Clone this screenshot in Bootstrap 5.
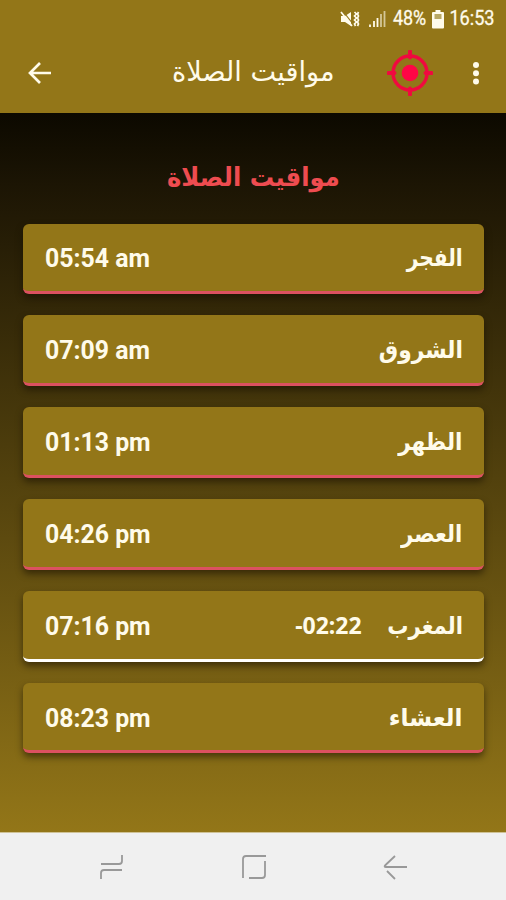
<!DOCTYPE html>
<html lang="ar">
<head>
<meta charset="utf-8">
<meta name="viewport" content="width=device-width, initial-scale=1">
<title>مواقيت الصلاة</title>
<link rel="stylesheet" href="https://cdn.jsdelivr.net/npm/bootstrap@5.3.0/dist/css/bootstrap.min.css">
<style>
:root{--gold:#937618;--cream:#fffbea}
body{height:900px;overflow:hidden;font-family:Roboto,"DejaVu Sans",sans-serif;color:var(--cream);background:#f0f0f0}
svg{display:block;flex:none}
.status{height:36px;padding:2px 11px 0 0;background:var(--gold);font-size:19.5px;line-height:36px;-webkit-text-stroke:.3px var(--cream)}
.status span{display:inline-block;transform-origin:right;white-space:nowrap}
.pct{width:34px;margin-left:6px}
.clock{width:46px;margin-left:5px}
.battery{margin-left:6px}
.pct span{transform:scaleX(.92)}
.clock span{transform:scaleX(.93)}
.appbar{height:77px;background:var(--gold);padding:0 26px 3px 26px}
.dots{margin-left:39px}
.ar{display:inline-block;font-family:"DejaVu Sans",sans-serif;white-space:nowrap;line-height:1}
.bar-title{margin-left:118px;width:164px}
.bar-title .ar{font-size:27.2px}
.heading{height:110.5px;padding-top:17px;color:#ee4c50}
.heading .ar{font-size:26px;font-weight:700;transform:scaleX(.935)}
.screen{height:719px;background:linear-gradient(#0c0900,#1c1504 10%,#937618);padding:0 22px 0 23px}
.prayers{gap:21.4px}
.prayer{height:70.5px;border-radius:6px;background:var(--gold);border-bottom:3px solid #dc5160;padding:2px 21.5px 0;box-shadow:0 4px 7px rgba(20,12,0,.55)}
.prayer.next{border-bottom-color:#fff}
.time{font-size:26px;font-weight:700;line-height:1;transform:scaleX(.955);transform-origin:left}
.prayer .ar{font-size:24px;font-weight:700;transform-origin:right}
.fajr{transform:scaleX(.84)}
.shuruq{transform:scaleX(.905)}
.dhuhr{transform:scaleX(.9)}
.asr{transform:scaleX(.885)}
.maghrib{transform:scaleX(.88)}
.isha{transform:scaleX(.965)}
.left{font:700 23px/1 "Noto Sans",sans-serif;margin-right:15px}
.softkeys{height:68px;border-top:1px solid #cfc296;padding:1px 98px 0 99px}
</style>
<script src="https://cdn.jsdelivr.net/npm/bootstrap@5.3.0/dist/js/bootstrap.bundle.min.js"></script>
</head>
<body class="m-0">
<div class="status d-flex align-items-center justify-content-end">
  <svg width="20" height="18" viewBox="0 0 20 18"><path d="M1 6h4l6-4v14l-6-4H1z" fill="#fffbea"/><path d="M2 0l11 14" stroke="#937618" stroke-width="1.200"/><path d="M1 2l11 14M14.500 2l2 2-2 2 2 2-2 2 2 2-2 2 1 2M18.500 2l-1 2 1 2-1 2 1 2-1 2 1 2-1 2" stroke="#fffbea" stroke-width="1.700" fill="none"/></svg>
  <svg class="ms-2" width="18" height="18" viewBox="0 0 18 18"><path d="M2 14.500v2.500M6 11v6M9.500 8v9" stroke="#fffbea" stroke-width="1.800"/><path d="M13 4v13M16.500 1v16" stroke="#d4c797" stroke-width="1.800"/></svg>
  <div class="pct d-flex justify-content-end"><span>48%</span></div>
  <svg class="battery" width="12" height="19" viewBox="0 0 12 19"><path d="M3.500 0h5v2H11a1 1 0 0 1 1 1v14.500a1 1 0 0 1-1 1H1a1 1 0 0 1-1-1V3a1 1 0 0 1 1-1h2.500z" fill="#fffbea"/><path d="M2.500 4h7v5h-7z" fill="#b9a864"/></svg>
  <div class="clock d-flex justify-content-end"><span>16:53</span></div>
</div>
<header class="appbar d-flex align-items-center">
  <svg width="28" height="28" viewBox="0 0 28 28"><path d="M25 14H4.500M14 4L4 14l10 10" fill="none" stroke="#fffbea" stroke-width="2.700"/></svg>
  <div class="bar-title"><span class="ar" dir="rtl">مواقيت الصلاة</span></div>
  <svg class="ms-auto" width="46" height="46" viewBox="0 0 46 46" fill="none" stroke="#f0093f"><circle cx="23" cy="23" r="17" stroke-width="3.400"/><circle cx="23" cy="23" r="8.300" fill="#ff0646" stroke="none"/><path d="M23 1.500v6M23 38.500v6M1.500 23h6M38.500 23h6" stroke-width="4" stroke-linecap="round"/></svg>
  <svg class="dots" width="8" height="24" viewBox="0 0 8 24" fill="#fffbea"><circle cx="4" cy="4" r="3"/><circle cx="4" cy="12.200" r="3"/><circle cx="4" cy="20.400" r="3"/></svg>
</header>
<main class="screen">
  <div class="heading d-flex justify-content-center align-items-center"><span class="ar" dir="rtl">مواقيت الصلاة</span></div>
  <div class="prayers d-flex flex-column">
    <div class="prayer d-flex align-items-center"><span class="time me-auto">05:54 am</span><span class="ar fajr" dir="rtl">الفجر</span></div>
    <div class="prayer d-flex align-items-center"><span class="time me-auto">07:09 am</span><span class="ar shuruq" dir="rtl">الشروق</span></div>
    <div class="prayer d-flex align-items-center"><span class="time me-auto">01:13 pm</span><span class="ar dhuhr" dir="rtl">الظهر</span></div>
    <div class="prayer d-flex align-items-center"><span class="time me-auto">04:26 pm</span><span class="ar asr" dir="rtl">العصر</span></div>
    <div class="prayer next d-flex align-items-center"><span class="time me-auto">07:16 pm</span><span class="left">-02:22</span><span class="ar maghrib" dir="rtl">المغرب</span></div>
    <div class="prayer d-flex align-items-center"><span class="time me-auto">08:23 pm</span><span class="ar isha" dir="rtl">العشاء</span></div>
  </div>
</main>
<nav class="softkeys d-flex justify-content-between align-items-center">
  <svg width="26" height="26" viewBox="0 0 26 26" fill="none" stroke="#999" stroke-width="1.800"><path d="M2 10h18q3 0 3-3V1M2 25v-6q0-3 3-3h18"/></svg>
  <svg width="26" height="26" viewBox="0 0 26 26" fill="none" stroke="#999" stroke-width="1.800"><path d="M2 24V5q0-3 3-3h20M24 7v14q0 3-3 3H8"/></svg>
  <svg width="26" height="26" viewBox="0 0 26 26" fill="none" stroke="#999" stroke-width="1.800"><path d="M25 13H4M13 2L3.500 11q-2 2 .5 2M5 17l8 8"/></svg>
</nav>
</body>
</html>
